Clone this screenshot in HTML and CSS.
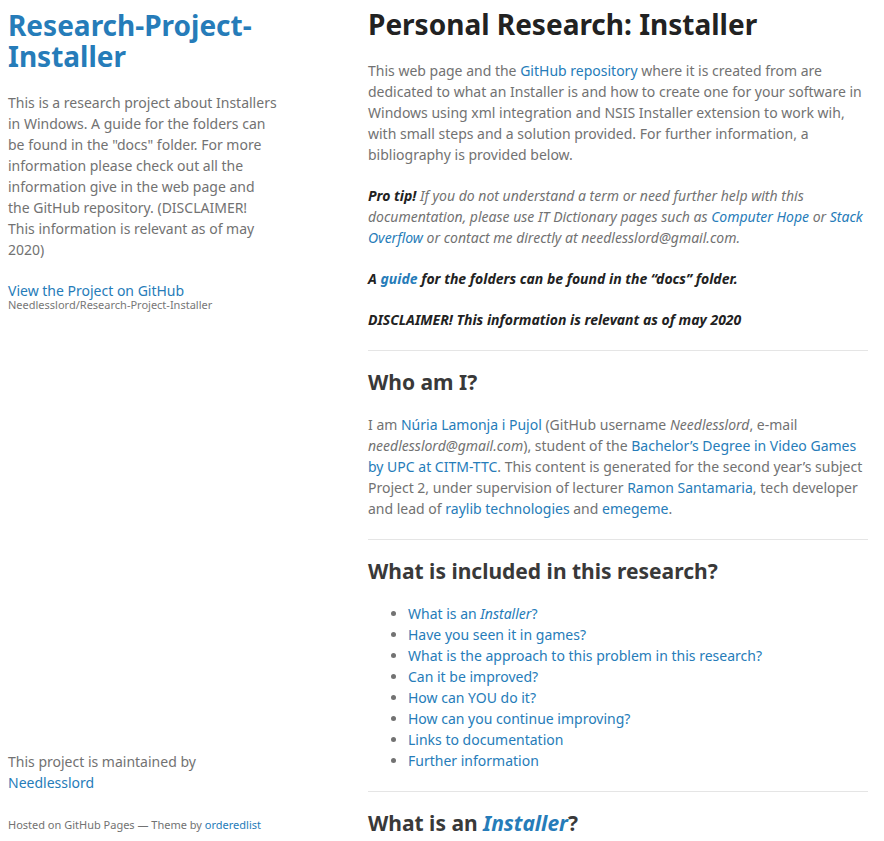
FILE: index.html
```html
<!DOCTYPE html>
<html lang="en">
<head>
<meta charset="utf-8">
<title>Research-Project-Installer</title>
<link rel="stylesheet" href="styles.css">
</head>
<body>
<div class="wrapper">
  <aside class="sidebar">
    <header class="site-header">
      <h1 class="site-title"><a href="#">Research-Project-Installer</a></h1>
      <p>This is a research project about Installers in Windows. A guide for the folders can be found in the "docs" folder. For more information please check out all the information give in the web page and the GitHub repository. (DISCLAIMER! This&nbsp;information is relevant as of may 2020)</p>
      <p class="view"><a href="#">View the Project on GitHub <small>Needlesslord/Research-Project-Installer</small></a></p>
    </header>
    <footer class="site-footer">
      <p>This project is maintained by <a href="#">Needlesslord</a></p>
      <p class="hosted"><small>Hosted on GitHub Pages &mdash; Theme by <a href="#">orderedlist</a></small></p>
    </footer>
  </aside>
  <section class="content">
    <h1>Personal Research: Installer</h1>
    <p>This web page and the <a href="#">GitHub repository</a> where it is created from are dedicated to what an Installer is and how to create one for your software in Windows using xml integration and NSIS Installer extension to work wih, with small steps and a solution provided. For further information, a bibliography is provided below.</p>
    <p><em><strong>Pro tip!</strong> If you do not understand a term or need further help with this documentation, please use IT Dictionary pages such as <a href="#">Computer Hope</a> or <a href="#">Stack Overflow</a> or contact me directly at needlesslord@gmail.com.</em></p>
    <p><strong><em>A <a href="#">guide</a> for the folders can be found in the “docs” folder.</em></strong></p>
    <p><strong><em>DISCLAIMER! This information is relevant as of may 2020</em></strong></p>
    <hr>
    <h2>Who am I?</h2>
    <p>I am <a href="#">Núria Lamonja i Pujol</a> (GitHub username <em>Needlesslord</em>, e-mail <em>needlesslord@gmail.com</em>), student of the <a href="#">Bachelor’s Degree in Video Games by UPC at CITM-TTC</a>. This content is generated for the second year’s subject Project 2, under supervision of lecturer <a href="#">Ramon Santamaria</a>, tech developer and lead of <a href="#">raylib technologies</a> and <a href="#">emegeme</a>.</p>
    <hr>
    <h2>What is included in this research?</h2>
    <ul>
      <li><a href="#">What is an <em>Installer</em>?</a></li>
      <li><a href="#">Have you seen it in games?</a></li>
      <li><a href="#">What is the approach to this problem in this research?</a></li>
      <li><a href="#">Can it be improved?</a></li>
      <li><a href="#">How can YOU do it?</a></li>
      <li><a href="#">How can you continue improving?</a></li>
      <li><a href="#">Links to documentation</a></li>
      <li><a href="#">Further information</a></li>
    </ul>
    <hr>
    <h2 class="last">What is an <a href="#"><em>Installer</em></a>?</h2>
  </section>
</div>
</body>
</html>
```

FILE: styles.css
```css
html, body {
  margin: 0;
  padding: 0;
  background: #fff;
}

body {
  font: 14px/1.5 "Noto Sans", "Helvetica Neue", Helvetica, Arial, sans-serif;
  color: #727272;
  font-weight: 400;
}

h1, h2, h3 {
  color: #222;
  margin: 0 0 20px;
  line-height: 1.1;
}

h1 {
  font-size: 28px;
}

h2 {
  font-size: 21px;
  color: #393939;
}

p, ul {
  margin: 0 0 20px;
}

a {
  color: #267CB9;
  text-decoration: none;
}

strong {
  color: #222;
  font-weight: 700;
}

hr {
  border: 0;
  background: #e5e5e5;
  height: 1px;
  margin: 0 0 20px;
}

.wrapper {
  width: 860px;
  margin-left: 8px;
  display: flex;
  align-items: flex-start;
}

.sidebar {
  width: 270px;
  height: 100vh;
  box-sizing: border-box;
  padding: 10px 0 7px;
  position: sticky;
  top: 0;
  display: flex;
  flex-direction: column;
  justify-content: space-between;
}

.view small {
  font-size: 11px;
  color: #777;
  margin-top: -0.3em;
  display: block;
}

.site-footer .hosted {
  margin-bottom: 0;
}

.site-footer small {
  font-size: 11px;
}

.content {
  width: 500px;
  margin-left: auto;
  padding-top: 9px;
}

.content ul {
  padding-left: 40px;
}

.content h2.last {
  margin-bottom: 0;
}
```
